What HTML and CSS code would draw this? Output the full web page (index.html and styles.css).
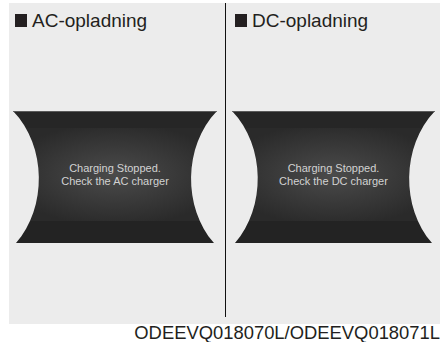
FILE: index.html
```html
<!DOCTYPE html>
<html lang="da">
<head>
  <meta charset="UTF-8">
  <title>AC/DC-opladning</title>
  <link rel="stylesheet" href="styles.css">
</head>
<body>

  <div class="panel">
    <!-- AC -->
    <section class="col col-ac">
      <h2 class="label"><span class="sq"></span>AC-opladning</h2>
      <div class="screen">
        <svg viewBox="0 0 204 132" preserveAspectRatio="none">
          <defs>
            <clipPath id="clipA"><path d="M0,0 H204 C170,35 170,97 201,132 H3 C34,97 34,35 0,0 Z"/></clipPath>
            <radialGradient id="glowA" cx="50%" cy="50%" r="55%">
              <stop offset="0" stop-color="#4b4b4b"/>
              <stop offset="1" stop-color="#2a2a2a"/>
            </radialGradient>
          </defs>
          <g clip-path="url(#clipA)">
            <rect x="0" y="0" width="204" height="17" fill="#262626"/>
            <rect x="0" y="0" width="204" height="1" fill="#5a5a5a"/>
            <rect x="0" y="17" width="204" height="93" fill="url(#glowA)"/>
            <rect x="0" y="110" width="204" height="22" fill="#232323"/>
          </g>
        </svg>
        <p class="msg">Charging Stopped.<br>Check the AC charger</p>
      </div>
    </section>

    <div class="divider"></div>

    <!-- DC -->
    <section class="col col-dc">
      <h2 class="label"><span class="sq"></span>DC-opladning</h2>
      <div class="screen">
        <svg viewBox="0 0 204 132" preserveAspectRatio="none">
          <defs>
            <clipPath id="clipB"><path d="M0,0 H204 C170,35 170,97 201,132 H3 C34,97 34,35 0,0 Z"/></clipPath>
            <radialGradient id="glowB" cx="50%" cy="50%" r="55%">
              <stop offset="0" stop-color="#4b4b4b"/>
              <stop offset="1" stop-color="#2a2a2a"/>
            </radialGradient>
          </defs>
          <g clip-path="url(#clipB)">
            <rect x="0" y="0" width="204" height="17" fill="#262626"/>
            <rect x="0" y="0" width="204" height="1" fill="#5a5a5a"/>
            <rect x="0" y="17" width="204" height="93" fill="url(#glowB)"/>
            <rect x="0" y="110" width="204" height="22" fill="#232323"/>
          </g>
        </svg>
        <p class="msg">Charging Stopped.<br>Check the DC charger</p>
      </div>
    </section>
  </div>

  <p class="code">ODEEVQ018070L/ODEEVQ018071L</p>

</body>
</html>
```

FILE: styles.css
```css
body {
  margin: 0;
  background: #fff;
  font-family: "Liberation Sans", Arial, sans-serif;
  color: #231f20;
  overflow: hidden;
}

.panel {
  margin: 3px 0 0 9px;
  height: 321px;
  background: #ececec;
  display: flex;
}

.col {
  display: flex;
  flex-direction: column;
}

.col-ac {
  width: 216px;
}

.col-dc {
  flex: 1;
}

.divider {
  width: 1px;
  height: 314px;
  background: #111;
}

.label {
  margin: 0;
  padding-top: 8px;
  display: flex;
  align-items: center;
  gap: 5px;
  font-size: 19px;
  font-weight: normal;
  line-height: 19px;
}

.col-ac .label { padding-left: 6px; }
.col-dc .label { padding-left: 9px; }

.sq {
  width: 12px;
  height: 13px;
  background: #231f20;
  margin-top: -1px;
}

.screen {
  position: relative;
  width: 204px;
  height: 132px;
  margin-top: 81px;
  display: flex;
  align-items: center;
  justify-content: center;
}

.col-ac .screen { margin-left: 4px; }
.col-dc .screen { margin-left: 6px; width: 203px; }

.screen svg {
  position: absolute;
  top: 0;
  left: 0;
  width: 100%;
  height: 100%;
}

.msg {
  position: relative;
  margin: 0 0 5px;
  text-align: center;
  font-size: 11px;
  line-height: 13px;
  color: #d2d2d2;
}

.code {
  margin: 0;
  text-align: right;
  font-size: 18.4px;
  line-height: 18px;
  white-space: nowrap;
}
```
